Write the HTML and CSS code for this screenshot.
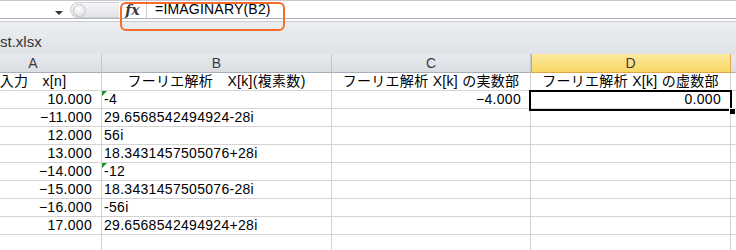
FILE: index.html
```html
<!DOCTYPE html>
<html>
    <head>
        <meta charset="utf-8">
        <title>IMAGINARY</title>
        <link rel="stylesheet" href="styles.css">
    </head>
    <body>
        <!-- Barra de formulas -->
        <div class="FormulaBar">
            <div class="NameBox"><span class="Drop"></span></div>
            <div class="Splitter"><span class="Knob"></span></div>
            <div class="Fx"><i>fx</i></div>
            <div class="Formula">=IMAGINARY(B2)</div>
            <div class="Callout"></div>
        </div>
        <div class="GapLine"></div>

        <!-- Titulo del libro -->
        <div class="TitleBar">st.xlsx</div>

        <!-- Hoja -->
        <div class="Sheet">
            <div class="Head">A</div>
            <div class="Head">B</div>
            <div class="Head">C</div>
            <div class="Head Active">D</div>
            <div class="Head Last"></div>

            <div class="Cell Center">入力　x[n]</div>
            <div class="Cell Center">フーリエ解析　X[k](複素数)</div>
            <div class="Cell Center">フーリエ解析 X[k] の実数部</div>
            <div class="Cell Center">フーリエ解析 X[k] の虚数部</div>
            <div class="Cell Last"></div>

            <div class="Cell Num">10.000</div>
            <div class="Cell Warn">-4</div>
            <div class="Cell Num">−4.000</div>
            <div class="Cell Num">0.000</div>
            <div class="Cell Last"></div>

            <div class="Cell Num">−11.000</div>
            <div class="Cell">29.6568542494924-28i</div>
            <div class="Cell"></div>
            <div class="Cell"></div>
            <div class="Cell Last"></div>

            <div class="Cell Num">12.000</div>
            <div class="Cell">56i</div>
            <div class="Cell"></div>
            <div class="Cell"></div>
            <div class="Cell Last"></div>

            <div class="Cell Num">13.000</div>
            <div class="Cell">18.3431457505076+28i</div>
            <div class="Cell"></div>
            <div class="Cell"></div>
            <div class="Cell Last"></div>

            <div class="Cell Num">−14.000</div>
            <div class="Cell Warn">-12</div>
            <div class="Cell"></div>
            <div class="Cell"></div>
            <div class="Cell Last"></div>

            <div class="Cell Num">−15.000</div>
            <div class="Cell">18.3431457505076-28i</div>
            <div class="Cell"></div>
            <div class="Cell"></div>
            <div class="Cell Last"></div>

            <div class="Cell Num">−16.000</div>
            <div class="Cell">-56i</div>
            <div class="Cell"></div>
            <div class="Cell"></div>
            <div class="Cell Last"></div>

            <div class="Cell Num">17.000</div>
            <div class="Cell">29.6568542494924+28i</div>
            <div class="Cell"></div>
            <div class="Cell"></div>
            <div class="Cell Last"></div>

            <div class="Cell"></div>
            <div class="Cell"></div>
            <div class="Cell"></div>
            <div class="Cell"></div>
            <div class="Cell Last"></div>

            <!-- Celda seleccionada D2 -->
            <div class="Selection"><span class="Handle"></span></div>
        </div>
    </body>
</html>
```
FILE: styles.css
```css
html, body{
    margin: 0;
    padding: 0;
    overflow: hidden;
    background-color: white;
}

body{
    width: 736px;
    height: 250px;
    font-family: "Liberation Sans", "Noto Sans CJK JP", sans-serif;
    font-size: 14px;
    color: black;
}

/* Barra de formulas */
.FormulaBar{
    position: relative;
    display: flex;
    height: 19px;
    box-sizing: border-box;
    border-top: 1px solid #c6cad0;
    border-bottom: 1px solid #aeb3ba;
    background-color: white;
}

.NameBox{
    width: 70px;
    display: flex;
    justify-content: flex-end;
    align-items: center;
    padding-right: 7px;
    box-sizing: border-box;
}

.Drop{
    width: 0;
    height: 0;
    border-left: 4px solid transparent;
    border-right: 4px solid transparent;
    border-top: 4px solid #333;
    margin-top: 6px;
}

.Splitter{
    width: 49px;
    height: 16px;
    margin-top: 1px;
    box-sizing: border-box;
    border: 1px solid #cfd2d6;
    border-right: none;
    border-radius: 9px 0 0 9px;
    background: linear-gradient(#f6f6f7, #e2e3e6);
    display: flex;
    align-items: center;
    padding-left: 2px;
}

.Knob{
    width: 11px;
    height: 11px;
    border-radius: 50%;
    border: 1px solid #c3c6cb;
    background: radial-gradient(circle at 40% 35%, #ffffff, #d9dbde);
}

.Fx{
    width: 28px;
    box-sizing: border-box;
    border-right: 1px solid #c9cdd3;
    display: flex;
    justify-content: center;
    align-items: center;
    font-family: "DejaVu Serif", serif;
    font-weight: bold;
    font-size: 14px;
    color: #3a3a3a;
}

.Formula{
    padding-left: 8px;
    line-height: 17px;
    letter-spacing: 0.2px;
}

.Callout{
    position: absolute;
    left: 120px;
    top: 1px;
    width: 165px;
    height: 29px;
    box-sizing: border-box;
    border: 2px solid #f66b2a;
    border-radius: 6px;
}

.GapLine{
    height: 2px;
    border-bottom: 1px solid #c9cdd3;
}

/* Titulo */
.TitleBar{
    height: 32px;
    box-sizing: border-box;
    padding-top: 13px;
    line-height: 14px;
    font-size: 15px;
    background: linear-gradient(#eceef1, #dfe2e7);
    color: #333;
}

/* Hoja */
.Sheet{
    position: relative;
    margin-left: -35px;
    display: grid;
    grid-template-columns: 137px 230px 199px 200px 1fr;
}

.Head{
    height: 19px;
    box-sizing: border-box;
    line-height: 18px;
    text-align: center;
    background: linear-gradient(#e6e9ed, #dadee4);
    border-right: 1px solid #c0c6ce;
    border-bottom: 1px solid #a9afb8;
    color: #3c3c3c;
}

.Head.Active{
    background: linear-gradient(#fde9a0, #f9d864);
    border-right-color: #e2a845;
    border-bottom-color: #e2a845;
    box-shadow: inset 1px 0 0 #e2a845;
}

.Cell{
    position: relative;
    height: 18px;
    box-sizing: border-box;
    line-height: 17px;
    white-space: nowrap;
    overflow: hidden;
    letter-spacing: 0.3px;
    border-right: 1px solid #d4d4d4;
    border-bottom: 1px solid #d4d4d4;
    padding-left: 2px;
}

.Head.Last, .Cell.Last{
    border-right: none;
}

.Center{
    text-align: center;
    padding-left: 0;
}

.Num{
    text-align: right;
    padding-right: 9px;
}

.Warn::before{
    content: "";
    position: absolute;
    left: 0;
    top: 0;
    border-top: 5px solid #1e8c2a;
    border-right: 5px solid transparent;
}

.Selection{
    position: absolute;
    left: 564px;
    top: 36px;
    width: 203px;
    height: 21px;
    box-sizing: border-box;
    border: 2px solid black;
}

.Handle{
    position: absolute;
    right: -5px;
    bottom: -5px;
    width: 5px;
    height: 5px;
    background-color: black;
    border-left: 1px solid white;
    border-top: 1px solid white;
}
```
